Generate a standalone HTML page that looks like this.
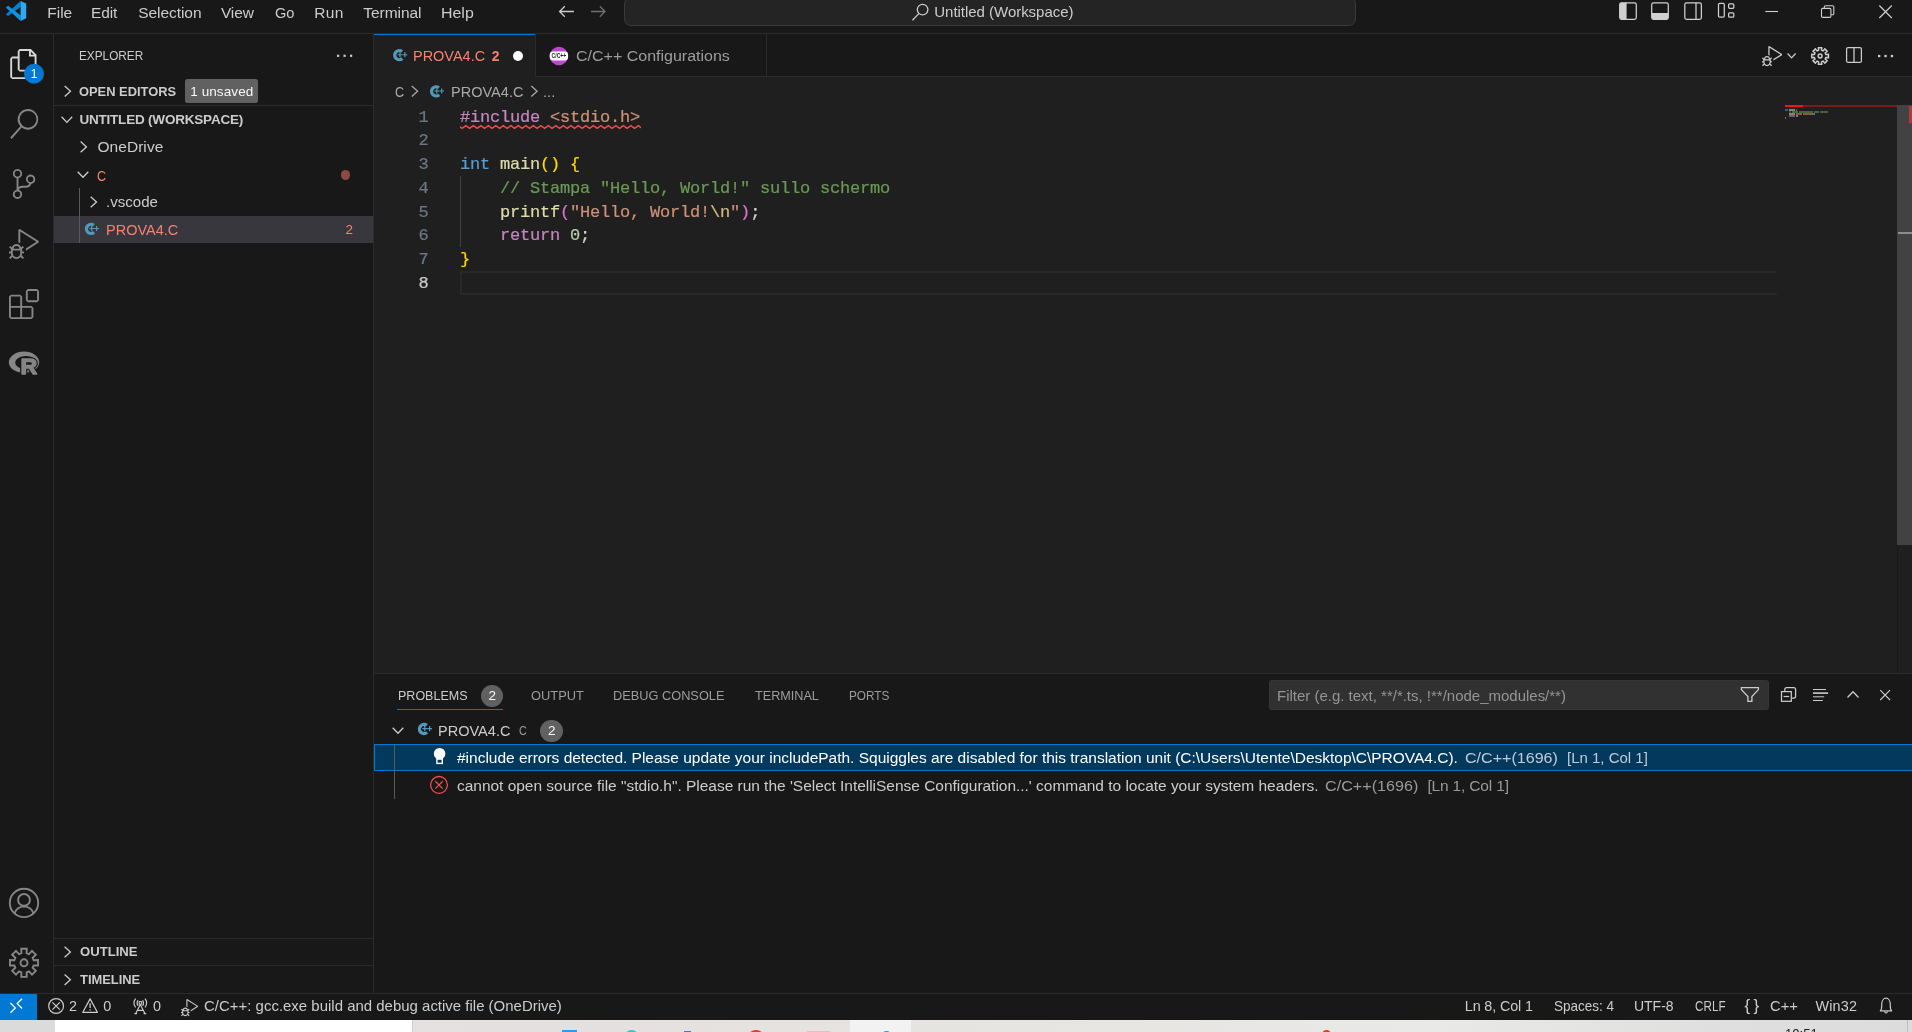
<!DOCTYPE html>
<html lang="en"><head><meta charset="utf-8"><title>PROVA4.C - Untitled (Workspace) - Visual Studio Code</title>
<style>
html,body{margin:0;padding:0;background:#181818;}
body{width:1912px;height:1032px;overflow:hidden;font-family:"Liberation Sans",sans-serif;}
#root{will-change:transform;position:relative;width:1912px;height:1032px;overflow:hidden;color:#ccc;font-size:15.5px;}
#root div,#root span,#root svg{position:absolute;box-sizing:border-box;}
.t{height:20px;line-height:20px;white-space:pre;transform-origin:0 50%;}
.b{background:#2b2b2b;}
.code{font-family:"Liberation Mono",monospace;white-space:pre;height:23.75px;line-height:23.75px;left:460px;font-size:17px;letter-spacing:-0.2px;color:#d4d4d4;margin-top:0.9px;-webkit-text-stroke:0.22px currentColor;}
.ln{font-family:"Liberation Mono",monospace;white-space:pre;height:23.75px;line-height:23.75px;font-size:17px;letter-spacing:-0.2px;color:#6e7681;width:30px;text-align:right;left:398.4px;margin-top:0.9px;-webkit-text-stroke:0.22px currentColor;}
.code span{position:static !important;}
svg{overflow:visible;}
</style></head><body><div id="root">

<!-- title bar -->
<div class="b" style="left:0;top:33px;width:1912px;height:1px"></div>
<div style="left:624px;top:-3px;width:732px;height:28.5px;border:1px solid #3a3a3a;background:#242424;border-radius:7px"></div>
<!-- activity bar / sidebar borders -->
<div class="b" style="left:53px;top:34px;width:1px;height:959px"></div>
<div class="b" style="left:373px;top:34px;width:1px;height:959px"></div>
<!-- sidebar -->
<div class="b" style="left:54px;top:105px;width:319px;height:1px"></div>
<div style="left:185px;top:79px;width:73px;height:24px;background:#616161;border-radius:2.5px"></div>
<div style="left:54px;top:215.7px;width:319px;height:27.2px;background:#37373d"></div>
<div style="left:79px;top:188.2px;width:1px;height:54.7px;background:#5a5a5a"></div>
<div style="left:341px;top:170.3px;width:9.4px;height:9.4px;border-radius:50%;background:#8c4a42"></div>
<div class="b" style="left:54px;top:938px;width:319px;height:1px"></div>
<div class="b" style="left:54px;top:965px;width:319px;height:1px"></div>
<!-- editor group -->
<div style="left:374px;top:77px;width:1538px;height:596px;background:#1f1f1f"></div>
<div class="b" style="left:374px;top:76px;width:1538px;height:1px"></div>
<div style="left:374px;top:34px;width:161px;height:43px;background:#1f1f1f"></div>
<div style="left:374px;top:33.8px;width:161px;height:1.5px;background:#0078d4"></div>
<div class="b" style="left:535px;top:34px;width:1px;height:42px"></div>
<div class="b" style="left:766px;top:34px;width:1px;height:42px"></div>
<div style="left:512.8px;top:51px;width:10.4px;height:10.4px;border-radius:50%;background:#ffffff"></div>
<!-- editor: current line, indent guide -->
<div style="left:460px;top:271px;width:1317px;height:24px;border:2px solid #282828;border-right:none"></div>
<div style="left:460px;top:176px;width:1px;height:71px;background:#404040"></div>
<!-- minimap + scrollbar -->
<div style="left:1785px;top:105px;width:112px;height:2px;background:#7c1919"></div>
<div style="left:1785px;top:105px;width:18px;height:2px;background:#ff1010"></div>
<div style="left:1785px;top:109px;width:3px;height:2px;background:#3a6184"></div>
<div style="left:1789px;top:109px;width:6px;height:2px;background:#86866f"></div>
<div style="left:1796px;top:109px;width:1px;height:2px;background:#7a6a20"></div>
<div style="left:1789px;top:111px;width:2px;height:2px;background:#3d5535"></div>
<div style="left:1792px;top:111px;width:6px;height:2px;background:#4b6b3f"></div>
<div style="left:1799px;top:111px;width:14px;height:2px;background:#46633b"></div>
<div style="left:1814px;top:111px;width:5px;height:2px;background:#46633b"></div>
<div style="left:1820px;top:111px;width:8px;height:2px;background:#46633b"></div>
<div style="left:1789px;top:113px;width:6px;height:2px;background:#86866f"></div>
<div style="left:1796px;top:113px;width:6px;height:2px;background:#7f5e4c"></div>
<div style="left:1803px;top:113px;width:9px;height:2px;background:#7f5e4c"></div>
<div style="left:1812px;top:113px;width:3px;height:2px;background:#6c6c6c"></div>
<div style="left:1789px;top:115px;width:6px;height:2px;background:#7a567a"></div>
<div style="left:1796px;top:115px;width:2px;height:2px;background:#74826d"></div>
<div style="left:1785px;top:117px;width:1px;height:2px;background:#857316"></div>
<div style="left:1897px;top:105px;width:15px;height:439.5px;background:#424242"></div>
<div style="left:1909px;top:106px;width:3px;height:17px;background:#ad3b3b"></div>
<div style="left:1898px;top:232px;width:14px;height:2px;background:#8c8c8c"></div>
<div style="left:1897px;top:545px;width:1px;height:128px;background:#171717"></div>
<!-- panel -->
<div class="b" style="left:374px;top:673px;width:1538px;height:1px"></div>
<div style="left:396.8px;top:708.5px;width:106.4px;height:1.5px;background:#0078d4"></div>
<div style="left:481px;top:684.5px;width:22.4px;height:22.4px;border-radius:50%;background:#616161"></div>
<div style="left:540.4px;top:719.8px;width:22.4px;height:22.4px;border-radius:50%;background:#616161"></div>
<div style="left:1269px;top:680px;width:500px;height:30px;background:#313131;border-radius:2.5px;border:1px solid #353535"></div>
<div style="left:374px;top:744px;width:1545px;height:27px;background:#04395e;border:1px solid #0078d4"></div>
<div style="left:394px;top:745px;width:1px;height:54px;background:#5a5a5a"></div>
<!-- status bar -->
<div class="b" style="left:0;top:993px;width:1912px;height:1px"></div>
<div style="left:0;top:994px;width:37px;height:26px;background:#0078d4"></div>
<!-- taskbar strip -->
<div style="left:0;top:1019.5px;width:1912px;height:13px;background:linear-gradient(90deg,#e6e3e1 0,#e4e0df 30%,#e6e4e1 50%,#e9e9e7 75%,#dedede 92%,#dcdcdc 100%)"></div>
<div style="left:0;top:1019.5px;width:54.5px;height:13px;background:#dcdbdb"></div>
<div style="left:54.5px;top:1019.5px;width:358.5px;height:13px;background:#ffffff;border-right:1px solid #cfcfcf"></div>
<div style="left:849.6px;top:1019.5px;width:61.7px;height:13px;background:#f2f2f2"></div>
<div style="left:562px;top:1030.2px;width:14.6px;height:3px;background:#2f9be6"></div>
<div style="left:623.7px;top:1029.6px;width:15.7px;height:16px;border-radius:50%;background:#35c1d8"></div>
<div style="left:684px;top:1031px;width:7px;height:3px;background:#5b6fb5"></div>
<div style="left:747px;top:1029.6px;width:18px;height:18px;border-radius:50%;background:#e8382f"></div>
<div style="left:806.7px;top:1031px;width:23px;height:3px;background:#e9b8c3"></div>
<div style="left:883px;top:1030.5px;width:7px;height:5px;border-radius:50% 50% 0 0;background:#2b8fe0"></div>
<div style="left:1322px;top:1029.8px;width:9px;height:9px;border-radius:50%;background:#e23a2e"></div>
<div style="left:1907px;top:1019.5px;width:1px;height:13px;background:#bdbdbd"></div>

<!-- icons -->
<svg style="left:9px;top:49px" width="30" height="30" viewBox="0 0 24 24" ><path d="M17.5 0h-9L7 1.5V6H2.5L1 7.5v15.07L2.5 24h12.07L16 22.57V18h4.7l1.3-1.43V4.5L17.5 0zm0 2.12l2.38 2.38H17.5V2.12zm-3 20.38h-12v-15H7v9.07L8.5 18h6v4.5zm6-6h-12v-15H16V6h4.5v10.5z" fill="#d7d7d7"/></svg>
<svg style="left:9px;top:109px" width="30" height="30" viewBox="0 0 24 24" ><path d="M15.25 0a8.25 8.25 0 0 0-6.18 13.72L1 22.88l1.12 1.12 8.05-9.12A8.251 8.251 0 1 0 15.25.01V0zm0 15a6.75 6.75 0 1 1 0-13.5 6.75 6.75 0 0 1 0 13.5z" fill="#868686"/></svg>
<svg style="left:9px;top:169px" width="30" height="30" viewBox="0 0 24 24" ><path d="M21.007 8.222A3.738 3.738 0 0 0 15.045 5.2a3.737 3.737 0 0 0 1.156 6.583 2.988 2.988 0 0 1-2.668 1.67h-2.99a4.456 4.456 0 0 0-2.989 1.165V7.4a3.737 3.737 0 1 0-1.494 0v9.117a3.776 3.776 0 1 0 1.816.099 2.99 2.99 0 0 1 2.668-1.667h2.99a4.484 4.484 0 0 0 4.223-3.039 3.736 3.736 0 0 0 3.25-3.687zM4.565 3.738a2.242 2.242 0 1 1 4.484 0 2.242 2.242 0 0 1-4.484 0zm4.484 16.441a2.242 2.242 0 1 1-4.484 0 2.242 2.242 0 0 1 4.484 0zm8.221-9.715a2.242 2.242 0 1 1 0-4.485 2.242 2.242 0 0 1 0 4.485z" fill="#868686"/></svg>
<svg style="left:9px;top:229px" width="30" height="30" viewBox="0 0 24 24" ><path d="M10.94 13.5l-1.32 1.32a3.73 3.73 0 0 0-7.24 0L1.06 13.5 0 14.56l1.72 1.72-.22.22V18H0v1.5h1.5v.08c.077.489.214.966.41 1.42L0 22.94 1.06 24l1.65-1.65A4.308 4.308 0 0 0 6 24a4.31 4.31 0 0 0 3.29-1.65L10.94 24 12 22.94 10.09 21c.198-.464.336-.951.41-1.45v-.1H12V18h-1.5v-1.5l-.22-.22L12 14.56l-1.06-1.06zM6 13.5a2.25 2.25 0 0 1 2.25 2.25h-4.5A2.25 2.25 0 0 1 6 13.5zm3 6a3.33 3.33 0 0 1-3 3 3.33 3.33 0 0 1-3-3v-2.25h6v2.25zm14.76-9.9v1.26L13.5 17.37V15.6l8.5-5.37L9 2v9.46a5.07 5.07 0 0 0-1.5-.72V.63L8.64 0l15.12 9.6z" fill="#868686"/></svg>
<svg style="left:9px;top:289px" width="30" height="30" viewBox="0 0 24 24" ><path d="M13.5 1.5L15 0h7.5L24 1.5V9l-1.5 1.5H15L13.5 9V1.5zm1.5 0V9h7.5V1.5H15zM0 15V6l1.5-1.5H9L10.5 6v7.5H18l1.5 1.5v7.5L18 24H1.5L0 22.5V15zm9-1.5V6H1.5v7.5H9zM9 15H1.5v7.5H9V15zm1.5 7.5H18V15h-7.5v7.5z" fill="#868686"/></svg>
<svg style="left:0;top:0" width="1" height="1"><polyline points="64.70,86.00 70.50,91.30 64.70,96.60" fill="none" stroke="#cccccc" stroke-width="1.3" stroke-linejoin="miter"/></svg>
<svg style="left:0;top:0" width="1" height="1"><polyline points="61.60,116.80 66.90,122.40 72.20,116.80" fill="none" stroke="#cccccc" stroke-width="1.3"/></svg>
<svg style="left:0;top:0" width="1" height="1"><polyline points="80.60,141.60 86.40,146.90 80.60,152.20" fill="none" stroke="#cccccc" stroke-width="1.3" stroke-linejoin="miter"/></svg>
<svg style="left:0;top:0" width="1" height="1"><polyline points="77.70,171.70 83.00,177.30 88.30,171.70" fill="none" stroke="#cccccc" stroke-width="1.3"/></svg>
<svg style="left:0;top:0" width="1" height="1"><polyline points="90.70,196.70 96.50,202.00 90.70,207.30" fill="none" stroke="#cccccc" stroke-width="1.3" stroke-linejoin="miter"/></svg>
<svg style="left:0;top:0" width="1" height="1"><polyline points="64.60,946.70 70.40,952.00 64.60,957.30" fill="none" stroke="#cccccc" stroke-width="1.3" stroke-linejoin="miter"/></svg>
<svg style="left:0;top:0" width="1" height="1"><polyline points="64.60,974.50 70.40,979.80 64.60,985.10" fill="none" stroke="#cccccc" stroke-width="1.3" stroke-linejoin="miter"/></svg>
<svg style="left:0;top:0" width="1" height="1"><polyline points="411.80,85.90 417.60,91.20 411.80,96.50" fill="none" stroke="#a9a9a9" stroke-width="1.3" stroke-linejoin="miter"/></svg>
<svg style="left:0;top:0" width="1" height="1"><polyline points="531.30,85.90 537.10,91.20 531.30,96.50" fill="none" stroke="#a9a9a9" stroke-width="1.3" stroke-linejoin="miter"/></svg>
<svg style="left:0;top:0" width="1" height="1"><polyline points="392.70,727.70 398.00,733.30 403.30,727.70" fill="none" stroke="#cccccc" stroke-width="1.3"/></svg>
<svg style="left:0;top:0" width="1" height="1"><polyline points="1787.60,53.55 1791.60,57.85 1795.60,53.55" fill="none" stroke="#cccccc" stroke-width="1.3"/></svg>
<svg style="left:0;top:0" width="1" height="1"><polyline points="1847.50,697.50 1853.00,691.70 1858.50,697.50" fill="none" stroke="#cccccc" stroke-width="1.3"/></svg>
<svg style="left:0;top:0" width="1" height="1"><circle cx="34" cy="73.7" r="10" fill="#0078d4"/></svg>
<span class="t" style="left:24px;top:63.7px;width:20px;text-align:center;font-size:12px;color:#fff">1</span>
<svg style="left:0;top:0" width="1" height="1"><rect x="337.0" y="54.7" width="2.2" height="2.2" fill="#cccccc"/><rect x="343.5" y="54.7" width="2.2" height="2.2" fill="#cccccc"/><rect x="350.0" y="54.7" width="2.2" height="2.2" fill="#cccccc"/></svg>
<svg style="left:0;top:0" width="1" height="1"><rect x="1878.0" y="54.9" width="2.3" height="2.3" fill="#cccccc"/><rect x="1884.4" y="54.9" width="2.3" height="2.3" fill="#cccccc"/><rect x="1890.8" y="54.9" width="2.3" height="2.3" fill="#cccccc"/></svg>
<svg style="left:0;top:0" width="1" height="1"><polygon points="20.6,1.0 20.6,6.9 8.1,16.1 5.8,14.5" fill="#0b7fcf"/><polygon points="5.8,7.4 8.1,5.8 20.6,15.2 20.6,21.1" fill="#1292dd"/><polygon points="20.6,1.0 26.2,3.6 26.2,18.3 20.6,21.1" fill="#2aaaf2"/></svg>
<svg style="left:0;top:0" width="1" height="1"><path d="M573.9 11.5H559.5999999999999 M564.8 6.3L559.5999999999999 11.5L564.8 16.7" fill="none" stroke="#cccccc" stroke-width="1.3"/></svg>
<svg style="left:0;top:0" width="1" height="1"><path d="M591 11.5H605.0 M599.8 6.3L605.0 11.5L599.8 16.7" fill="none" stroke="#6f6f6f" stroke-width="1.3"/></svg>
<svg style="left:0;top:0" width="1" height="1"><circle cx="922.6" cy="9.6" r="5.3" fill="none" stroke="#cccccc" stroke-width="1.3"/><path d="M918.8 13.6L912.5 20.2" stroke="#cccccc" stroke-width="1.3"/></svg>
<svg style="left:0;top:0" width="1" height="1"><rect x="1619.7" y="2.9" width="16.6" height="16.4" rx="1.8" fill="none" stroke="#d0d0d0" stroke-width="1.25"/><path d="M1619.7 4.5a1.7 1.7 0 0 1 1.7-1.7H1626.6V19.3H1621.4a1.7 1.7 0 0 1-1.7-1.7z" fill="#d0d0d0"/></svg>
<svg style="left:0;top:0" width="1" height="1"><rect x="1651.7" y="2.9" width="16.6" height="16.4" rx="1.8" fill="none" stroke="#d0d0d0" stroke-width="1.25"/><path d="M1651.7 13H1668.3V17.6a1.7 1.7 0 0 1-1.7 1.7H1653.4a1.7 1.7 0 0 1-1.7-1.7z" fill="#d0d0d0"/></svg>
<svg style="left:0;top:0" width="1" height="1"><rect x="1684.8" y="2.9" width="16.6" height="16.4" rx="1.8" fill="none" stroke="#d0d0d0" stroke-width="1.25"/><path d="M1696 2.9V19.3" stroke="#d0d0d0" stroke-width="1.25"/></svg>
<svg style="left:0;top:0" width="1" height="1"><rect x="1718.5" y="3.4" width="5.8" height="13.8" rx="1.2" fill="none" stroke="#d0d0d0" stroke-width="1.25"/><rect x="1728.6" y="3.9" width="5.2" height="4.4" rx="1.0" fill="none" stroke="#d0d0d0" stroke-width="1.25"/><rect x="1728.6" y="12.8" width="5.2" height="4.4" rx="1.0" fill="none" stroke="#d0d0d0" stroke-width="1.25"/></svg>
<svg style="left:0;top:0" width="1" height="1"><path d="M1765.3 11.5H1778" stroke="#d0d0d0" stroke-width="1.1"/></svg>
<svg style="left:0;top:0" width="1" height="1"><rect x="1821.5" y="8.4" width="9.4" height="9" rx="1.2" fill="none" stroke="#d0d0d0" stroke-width="1.1"/><path d="M1824.3 8.2V6.9a1.2 1.2 0 0 1 1.2-1.2H1832.6a1.2 1.2 0 0 1 1.2 1.2V13.6a1.2 1.2 0 0 1-1.2 1.2H1831.2" fill="none" stroke="#d0d0d0" stroke-width="1.1"/></svg>
<svg style="left:0;top:0" width="1" height="1"><path d="M1879.3 5.5L1891.8 18M1891.8 5.5L1879.3 18" stroke="#d0d0d0" stroke-width="1.15"/></svg>
<svg style="left:0;top:0" width="1" height="1"><path fill-rule="evenodd" fill="#868686" d="M8.8 362.3a15.2 10.7 0 1 0 30.4 0a15.2 10.7 0 1 0 -30.4 0zM15.1 362.6a10.9 6.6 0 1 1 21.8 0a10.9 6.6 0 1 1 -21.8 0z"/><text transform="translate(20.6,374.2) scale(1.08,1)" x="0" y="0" font-family="Liberation Sans, sans-serif" font-weight="700" font-size="21.5" fill="#181818" stroke="#181818" stroke-width="3.6" stroke-linejoin="round">R</text><text transform="translate(20.6,374.2) scale(1.08,1)" x="0" y="0" font-family="Liberation Sans, sans-serif" font-weight="700" font-size="21.5" fill="#868686" stroke="#868686" stroke-width="1.3" stroke-linejoin="round">R</text></svg>
<svg style="left:0;top:0" width="1" height="1"><circle cx="24" cy="902.9" r="14.2" fill="none" stroke="#868686" stroke-width="1.9"/><circle cx="24" cy="899.9" r="5.9" fill="none" stroke="#868686" stroke-width="1.9"/><path d="M14.6 913.2Q17 906.6 24 906.6Q31 906.6 33.4 913.2" fill="none" stroke="#868686" stroke-width="1.9"/></svg>
<svg style="left:0;top:0" width="1" height="1"><polygon points="21.41,953.14 21.27,948.76 26.73,948.76 26.59,953.14 29.00,954.14 32.00,950.94 35.86,954.80 32.66,957.80 33.66,960.21 38.04,960.07 38.04,965.53 33.66,965.39 32.66,967.80 35.86,970.80 32.00,974.66 29.00,971.46 26.59,972.46 26.73,976.84 21.27,976.84 21.41,972.46 19.00,971.46 16.00,974.66 12.14,970.80 15.34,967.80 14.34,965.39 9.96,965.53 9.96,960.07 14.34,960.21 15.34,957.80 12.14,954.80 16.00,950.94 19.00,954.14" fill="none" stroke="#868686" stroke-width="1.9" stroke-linejoin="miter"/><circle cx="24" cy="962.8" r="3.5" fill="none" stroke="#868686" stroke-width="1.9"/></svg>
<svg style="left:0;top:0" width="1" height="1"><polygon points="1818.57,50.30 1818.48,47.66 1821.72,47.66 1821.63,50.30 1823.05,50.89 1824.85,48.95 1827.15,51.25 1825.21,53.05 1825.80,54.47 1828.44,54.38 1828.44,57.62 1825.80,57.53 1825.21,58.95 1827.15,60.75 1824.85,63.05 1823.05,61.11 1821.63,61.70 1821.72,64.34 1818.48,64.34 1818.57,61.70 1817.15,61.11 1815.35,63.05 1813.05,60.75 1814.99,58.95 1814.40,57.53 1811.76,57.62 1811.76,54.38 1814.40,54.47 1814.99,53.05 1813.05,51.25 1815.35,48.95 1817.15,50.89" fill="none" stroke="#cccccc" stroke-width="1.5" stroke-linejoin="miter"/><circle cx="1820.1" cy="56" r="1.9" fill="none" stroke="#cccccc" stroke-width="1.5"/></svg>
<svg style="left:1761.7px;top:46px" width="20.2" height="20.2" viewBox="0 0 24 24" ><path d="M10.94 13.5l-1.32 1.32a3.73 3.73 0 0 0-7.24 0L1.06 13.5 0 14.56l1.72 1.72-.22.22V18H0v1.5h1.5v.08c.077.489.214.966.41 1.42L0 22.94 1.06 24l1.65-1.65A4.308 4.308 0 0 0 6 24a4.31 4.31 0 0 0 3.29-1.65L10.94 24 12 22.94 10.09 21c.198-.464.336-.951.41-1.45v-.1H12V18h-1.5v-1.5l-.22-.22L12 14.56l-1.06-1.06zM6 13.5a2.25 2.25 0 0 1 2.25 2.25h-4.5A2.25 2.25 0 0 1 6 13.5zm3 6a3.33 3.33 0 0 1-3 3 3.33 3.33 0 0 1-3-3v-2.25h6v2.25zm14.76-9.9v1.26L13.5 17.37V15.6l8.5-5.37L9 2v9.46a5.07 5.07 0 0 0-1.5-.72V.63L8.64 0l15.12 9.6z" fill="#cccccc"/></svg>
<svg style="left:0;top:0" width="1" height="1"><rect x="1846.6" y="47.6" width="14.8" height="14.8" rx="1.5" fill="none" stroke="#cccccc" stroke-width="1.25"/><path d="M1854 47.6V62.4" stroke="#cccccc" stroke-width="1.25"/></svg>
<svg style="left:0;top:0" width="1" height="1"><path d="M402.10 51.51A4.55 4.55 0 1 0 402.34 58.48" fill="none" stroke="#519aba" stroke-width="3.30"/><path d="M397.60 54.70H402.40M400.00 52.10V57.30" stroke="#519aba" stroke-width="1.15" fill="none"/><path d="M402.50 54.70H407.30M404.90 52.10V57.30" stroke="#519aba" stroke-width="1.15" fill="none"/></svg>
<svg style="left:0;top:0" width="1" height="1"><path d="M438.90 87.81A4.55 4.55 0 1 0 439.14 94.78" fill="none" stroke="#519aba" stroke-width="3.30"/><path d="M434.40 91.00H439.20M436.80 88.40V93.60" stroke="#519aba" stroke-width="1.15" fill="none"/><path d="M439.30 91.00H444.10M441.70 88.40V93.60" stroke="#519aba" stroke-width="1.15" fill="none"/></svg>
<svg style="left:0;top:0" width="1" height="1"><path d="M93.80 225.31A4.55 4.55 0 1 0 94.04 232.28" fill="none" stroke="#519aba" stroke-width="3.30"/><path d="M89.30 228.50H94.10M91.70 225.90V231.10" stroke="#519aba" stroke-width="1.15" fill="none"/><path d="M94.20 228.50H99.00M96.60 225.90V231.10" stroke="#519aba" stroke-width="1.15" fill="none"/></svg>
<svg style="left:0;top:0" width="1" height="1"><path d="M426.80 725.41A4.55 4.55 0 1 0 427.04 732.38" fill="none" stroke="#519aba" stroke-width="3.30"/><path d="M422.30 728.60H427.10M424.70 726.00V731.20" stroke="#519aba" stroke-width="1.15" fill="none"/><path d="M427.20 728.60H432.00M429.60 726.00V731.20" stroke="#519aba" stroke-width="1.15" fill="none"/></svg>
<svg style="left:0;top:0" width="1" height="1"><circle cx="558.9" cy="56" r="9.2" fill="#b84ac9"/><rect x="549.7" y="51.5" width="18.4" height="9" rx="3.4" fill="#ffffff"/><text x="558.9" y="58.3" text-anchor="middle" font-family="Liberation Sans, sans-serif" font-weight="700" font-size="6.4" fill="#222" textLength="14.6" lengthAdjust="spacingAndGlyphs">C/C++</text></svg>
<svg style="left:0;top:0" width="1" height="1"><path d="M1741.4 687.7H1758.4V689.6L1751.9 696.6V701.3H1747.9V696.6L1741.4 689.6Z" fill="none" stroke="#cccccc" stroke-width="1.3" stroke-linejoin="miter"/></svg>
<svg style="left:0;top:0" width="1" height="1"><rect x="1781.5" y="691.6" width="9.8" height="9.7" fill="none" stroke="#cccccc" stroke-width="1.25"/><path d="M1784.8 691.4V689.4a1.9 1.9 0 0 1 1.9-1.9H1793.7a1.9 1.9 0 0 1 1.9 1.9V696.2a1.9 1.9 0 0 1-1.9 1.9H1791.6" fill="none" stroke="#cccccc" stroke-width="1.25"/><path d="M1783.6 696.5H1789.2" stroke="#cccccc" stroke-width="1.25"/></svg>
<svg style="left:0;top:0" width="1" height="1"><path d="M1813 689.5H1826" stroke="#cccccc" stroke-width="1.0"/><path d="M1813 693.1H1828.1" stroke="#cccccc" stroke-width="1.6"/><path d="M1813 696.8H1824.2" stroke="#cccccc" stroke-width="1.0"/><path d="M1813 700.5H1822.8" stroke="#cccccc" stroke-width="1.0"/></svg>
<svg style="left:0;top:0" width="1" height="1"><path d="M1880.2 690.2L1890 700M1890 690.2L1880.2 700" stroke="#cccccc" stroke-width="1.15"/></svg>
<svg style="left:0;top:0" width="1" height="1"><circle cx="439.6" cy="753.7" r="5.8" fill="#ffffff"/><path d="M436.2 757H443V764.1H436.2Z" fill="#ffffff"/><rect x="437.6" y="759.8" width="4" height="2.9" fill="#04395e"/></svg>
<svg style="left:0;top:0" width="1" height="1"><circle cx="439" cy="784.9" r="8.4" fill="none" stroke="#f14c4c" stroke-width="1.3"/><path d="M435.3 781.2L442.7 788.6M442.7 781.2L435.3 788.6" stroke="#f14c4c" stroke-width="1.3"/></svg>
<svg style="left:0;top:0" width="1" height="1"><path d="M10.4 1003L15.3 1007.9L10.4 1012.8" fill="none" stroke="#fff" stroke-width="1.3"/><path d="M22.1 998.7L17.2 1003.6L22.1 1008.5" fill="none" stroke="#fff" stroke-width="1.3"/></svg>
<svg style="left:0;top:0" width="1" height="1"><circle cx="56.1" cy="1006" r="7.4" fill="none" stroke="#cccccc" stroke-width="1.2"/><path d="M52.4 1002.3L59.8 1009.7M59.8 1002.3L52.4 1009.7" stroke="#cccccc" stroke-width="1.2"/></svg>
<svg style="left:0;top:0" width="1" height="1"><path d="M90.1 998.9L97.4 1012.3H82.8Z" fill="none" stroke="#cccccc" stroke-width="1.2" stroke-linejoin="round"/><path d="M90.1 1003.3V1008" stroke="#cccccc" stroke-width="1.3"/><path d="M90.1 1009.2V1010.6" stroke="#cccccc" stroke-width="1.3"/></svg>
<svg style="left:0;top:0" width="1" height="1"><path d="M135.6 998.6Q132.3 1003 135.6 1007.4M138.0 1000.2Q136.2 1003 138.0 1005.8M145.0 998.6Q148.3 1003 145.0 1007.4M142.6 1000.2Q144.4 1003 142.6 1005.8" fill="none" stroke="#cccccc" stroke-width="1.15"/><rect x="139.2" y="1001.6" width="2.2" height="2.6" fill="none" stroke="#cccccc" stroke-width="1.0"/><path d="M140.3 1004.4L135.6 1013.8M140.3 1004.4L145 1013.8M137.3 1010.4H143.3M134.4 1013.6H137M143.6 1013.6H146.2" fill="none" stroke="#cccccc" stroke-width="1.15"/></svg>
<svg style="left:180.7px;top:998.6px" width="17.2" height="17.2" viewBox="0 0 24 24" ><path d="M10.94 13.5l-1.32 1.32a3.73 3.73 0 0 0-7.24 0L1.06 13.5 0 14.56l1.72 1.72-.22.22V18H0v1.5h1.5v.08c.077.489.214.966.41 1.42L0 22.94 1.06 24l1.65-1.65A4.308 4.308 0 0 0 6 24a4.31 4.31 0 0 0 3.29-1.65L10.94 24 12 22.94 10.09 21c.198-.464.336-.951.41-1.45v-.1H12V18h-1.5v-1.5l-.22-.22L12 14.56l-1.06-1.06zM6 13.5a2.25 2.25 0 0 1 2.25 2.25h-4.5A2.25 2.25 0 0 1 6 13.5zm3 6a3.33 3.33 0 0 1-3 3 3.33 3.33 0 0 1-3-3v-2.25h6v2.25zm14.76-9.9v1.26L13.5 17.37V15.6l8.5-5.37L9 2v9.46a5.07 5.07 0 0 0-1.5-.72V.63L8.64 0l15.12 9.6z" fill="#cccccc"/></svg>
<svg style="left:0;top:0" width="1" height="1"><path d="M1880.3 1010.9C1881.9 1009.6 1881.7 1007.4 1881.7 1004.6C1881.7 1000.8 1883.6 998.2 1886 998.2C1888.4 998.2 1890.3 1000.8 1890.3 1004.6C1890.3 1007.4 1890.1 1009.6 1891.7 1010.9Z" fill="none" stroke="#cccccc" stroke-width="1.2" stroke-linejoin="round"/><path d="M1884.5 1011.4Q1886 1014.6 1887.5 1011.4" fill="none" stroke="#cccccc" stroke-width="1.2"/></svg>
<!-- code -->
<div class="ln" style="top:104.625px">1</div>
<div class="ln" style="top:128.375px">2</div>
<div class="ln" style="top:152.125px">3</div>
<div class="ln" style="top:175.875px">4</div>
<div class="ln" style="top:199.625px">5</div>
<div class="ln" style="top:223.375px">6</div>
<div class="ln" style="top:247.125px">7</div>
<div class="ln" style="top:270.875px;color:#cccccc">8</div>
<div class="code" style="top:104.625px"><span style="color:#c586c0">#include</span> <span style="color:#ce9178">&lt;stdio.h&gt;</span></div>
<div class="code" style="top:152.125px"><span style="color:#569cd6">int</span> <span style="color:#dcdcaa">main</span><span style="color:#ffd700">()</span> <span style="color:#ffd700">{</span></div>
<div class="code" style="top:175.875px">    <span style="color:#6a9955">// Stampa "Hello, World!" sullo schermo</span></div>
<div class="code" style="top:199.625px">    <span style="color:#dcdcaa">printf</span><span style="color:#da70d6">(</span><span style="color:#ce9178">"Hello, World!</span><span style="color:#d7ba7d">\n</span><span style="color:#ce9178">"</span><span style="color:#da70d6">)</span>;</div>
<div class="code" style="top:223.375px">    <span style="color:#c586c0">return</span> <span style="color:#b5cea8">0</span>;</div>
<div class="code" style="top:247.125px"><span style="color:#ffd700">}</span></div>
<svg style="left:460px;top:124px;overflow:hidden" width="180.5" height="6" viewBox="0 0 180.5 6"><path d="M-1.65 1.70 L2.10 4.30 L5.85 1.70 L9.60 4.30 L13.35 1.70 L17.10 4.30 L20.85 1.70 L24.60 4.30 L28.35 1.70 L32.10 4.30 L35.85 1.70 L39.60 4.30 L43.35 1.70 L47.10 4.30 L50.85 1.70 L54.60 4.30 L58.35 1.70 L62.10 4.30 L65.85 1.70 L69.60 4.30 L73.35 1.70 L77.10 4.30 L80.85 1.70 L84.60 4.30 L88.35 1.70 L92.10 4.30 L95.85 1.70 L99.60 4.30 L103.35 1.70 L107.10 4.30 L110.85 1.70 L114.60 4.30 L118.35 1.70 L122.10 4.30 L125.85 1.70 L129.60 4.30 L133.35 1.70 L137.10 4.30 L140.85 1.70 L144.60 4.30 L148.35 1.70 L152.10 4.30 L155.85 1.70 L159.60 4.30 L163.35 1.70 L167.10 4.30 L170.85 1.70 L174.60 4.30 L178.35 1.70 L182.10 4.30" fill="none" stroke="#f14c4c" stroke-width="1.45" stroke-linejoin="miter"/></svg>
<!-- text -->
<span class="t" style="left:47.20px;top:2.50px;font-size:15.5px;color:#cccccc;letter-spacing:0.015px;">File</span>
<span class="t" style="left:91.10px;top:2.50px;font-size:15.5px;color:#cccccc;letter-spacing:-0.167px;">Edit</span>
<span class="t" style="left:138.30px;top:2.50px;font-size:15.5px;color:#cccccc;letter-spacing:-0.068px;">Selection</span>
<span class="t" style="left:220.90px;top:2.50px;font-size:15.5px;color:#cccccc;letter-spacing:-0.074px;">View</span>
<span class="t" style="left:275.40px;top:2.50px;font-size:15.5px;color:#cccccc;transform:scaleX(0.9423);">Go</span>
<span class="t" style="left:314.30px;top:2.50px;font-size:15.5px;color:#cccccc;letter-spacing:0.293px;">Run</span>
<span class="t" style="left:363.30px;top:2.50px;font-size:15.5px;color:#cccccc;letter-spacing:-0.061px;">Terminal</span>
<span class="t" style="left:441.37px;top:2.50px;font-size:15.5px;color:#cccccc;transform:scaleX(1.0278);">Help</span>
<span class="t" style="left:934.30px;top:2.20px;font-size:15px;color:#cccccc;letter-spacing:-0.030px;">Untitled (Workspace)</span>
<span class="t" style="left:413.27px;top:46.00px;font-size:15.5px;color:#f88070;transform:scaleX(0.9337);">PROVA4.C</span>
<span class="t" style="left:491.75px;top:46.00px;font-size:14px;color:#f88070;font-weight:700;">2</span>
<span class="t" style="left:576.40px;top:46.00px;font-size:15.5px;color:#9d9d9d;transform:scaleX(1.0321);">C/C++ Configurations</span>
<span class="t" style="left:394.60px;top:82.20px;font-size:15.5px;color:#a9a9a9;transform:scaleX(0.8182);">C</span>
<span class="t" style="left:451.36px;top:82.20px;font-size:15.5px;color:#a9a9a9;transform:scaleX(0.9376);">PROVA4.C</span>
<span class="t" style="left:543.25px;top:82.20px;font-size:15.5px;color:#a9a9a9;transform:scaleX(0.9517);">...</span>
<span class="t" style="left:78.53px;top:45.80px;font-size:13.5px;color:#cccccc;transform:scaleX(0.8739);">EXPLORER</span>
<span class="t" style="left:79.40px;top:82.10px;font-size:13.5px;color:#cccccc;font-weight:700;transform:scaleX(0.9541);">OPEN EDITORS</span>
<span class="t" style="left:190.20px;top:81.80px;font-size:13.5px;color:#f8f8f8;letter-spacing:0.101px;">1 unsaved</span>
<span class="t" style="left:79.40px;top:110.40px;font-size:13.5px;color:#cccccc;font-weight:700;letter-spacing:-0.202px;">UNTITLED (WORKSPACE)</span>
<span class="t" style="left:97.40px;top:137.30px;font-size:15.5px;color:#cccccc;letter-spacing:0.065px;">OneDrive</span>
<span class="t" style="left:97.40px;top:165.70px;font-size:15.5px;color:#f88070;transform:scaleX(0.8091);">C</span>
<span class="t" style="left:106.23px;top:192.40px;font-size:15.5px;color:#cccccc;transform:scaleX(0.9730);">.vscode</span>
<span class="t" style="left:106.26px;top:220.20px;font-size:15.5px;color:#f88070;transform:scaleX(0.9350);">PROVA4.C</span>
<span class="t" style="left:345.50px;top:220.20px;font-size:13.5px;color:#f88070;">2</span>
<span class="t" style="left:79.70px;top:942.00px;font-size:13.5px;color:#cccccc;font-weight:700;transform:scaleX(0.9706);">OUTLINE</span>
<span class="t" style="left:79.70px;top:969.80px;font-size:13.5px;color:#cccccc;font-weight:700;transform:scaleX(0.9557);">TIMELINE</span>
<span class="t" style="left:398.17px;top:685.80px;font-size:13.5px;color:#cccccc;transform:scaleX(0.9268);">PROBLEMS</span>
<span class="t" style="left:488.50px;top:685.60px;font-size:13.5px;color:#f8f8f8;">2</span>
<span class="t" style="left:531.30px;top:685.80px;font-size:13.5px;color:#9d9d9d;transform:scaleX(0.9520);">OUTPUT</span>
<span class="t" style="left:613.05px;top:685.80px;font-size:13.5px;color:#9d9d9d;transform:scaleX(0.9463);">DEBUG CONSOLE</span>
<span class="t" style="left:754.90px;top:685.80px;font-size:13.5px;color:#9d9d9d;transform:scaleX(0.9353);">TERMINAL</span>
<span class="t" style="left:849.13px;top:685.80px;font-size:13.5px;color:#9d9d9d;transform:scaleX(0.8728);">PORTS</span>
<span class="t" style="left:1276.83px;top:685.50px;font-size:15.5px;color:#959595;transform:scaleX(0.9665);">Filter (e.g. text, **/*.ts, !**/node_modules/**)</span>
<span class="t" style="left:438.36px;top:720.50px;font-size:15.5px;color:#cccccc;transform:scaleX(0.9376);">PROVA4.C</span>
<span class="t" style="left:518.60px;top:720.50px;font-size:13.5px;color:#9a9a9a;transform:scaleX(0.8000);">C</span>
<span class="t" style="left:548.10px;top:721.00px;font-size:13.5px;color:#f8f8f8;">2</span>
<span class="t" style="left:457.00px;top:748.40px;font-size:15.5px;color:#ffffff;letter-spacing:-0.012px;">#include errors detected. Please update your includePath. Squiggles are disabled for this translation unit (C:\Users\Utente\Desktop\C\PROVA4.C).</span>
<span class="t" style="left:1464.90px;top:748.40px;font-size:15.5px;color:#c0cbd4;transform:scaleX(1.0364);">C/C++(1696)</span>
<span class="t" style="left:1567.03px;top:748.40px;font-size:15.5px;color:#c0cbd4;transform:scaleX(0.9675);">[Ln 1, Col 1]</span>
<span class="t" style="left:457.00px;top:775.70px;font-size:15.5px;color:#cccccc;letter-spacing:-0.025px;">cannot open source file &quot;stdio.h&quot;. Please run the &#x27;Select IntelliSense Configuration...&#x27; command to locate your system headers.</span>
<span class="t" style="left:1325.30px;top:775.70px;font-size:15.5px;color:#9a9a9a;transform:scaleX(1.0409);">C/C++(1696)</span>
<span class="t" style="left:1427.40px;top:775.70px;font-size:15.5px;color:#9a9a9a;letter-spacing:-0.164px;">[Ln 1, Col 1]</span>
<span class="t" style="left:69.10px;top:996.00px;font-size:14.4px;color:#cccccc;">2</span>
<span class="t" style="left:103.15px;top:996.00px;font-size:14.4px;color:#cccccc;">0</span>
<span class="t" style="left:152.95px;top:996.00px;font-size:14.4px;color:#cccccc;">0</span>
<span class="t" style="left:203.70px;top:996.00px;font-size:14.4px;color:#cccccc;transform:scaleX(1.0403);">C/C++: gcc.exe build and debug active file (OneDrive)</span>
<span class="t" style="left:1464.80px;top:996.00px;font-size:14.4px;color:#cccccc;letter-spacing:-0.150px;">Ln 8, Col 1</span>
<span class="t" style="left:1554.40px;top:996.00px;font-size:14.4px;color:#cccccc;transform:scaleX(0.9391);">Spaces: 4</span>
<span class="t" style="left:1634.43px;top:996.00px;font-size:14.4px;color:#cccccc;transform:scaleX(0.9707);">UTF-8</span>
<span class="t" style="left:1694.90px;top:996.00px;font-size:14.4px;color:#cccccc;transform:scaleX(0.8124);">CRLF</span>
<span class="t" style="left:1744.60px;top:995.60px;font-size:17px;color:#cccccc;">{</span>
<span class="t" style="left:1753.40px;top:995.60px;font-size:17px;color:#cccccc;">}</span>
<span class="t" style="left:1769.90px;top:996.00px;font-size:14.4px;color:#cccccc;transform:scaleX(1.0263);">C++</span>
<span class="t" style="left:1815.50px;top:996.00px;font-size:14.4px;color:#cccccc;letter-spacing:0.153px;">Win32</span>
<span class="t" style="left:1784.60px;top:1023.90px;font-size:14.5px;color:#1c1c1c;transform:scaleX(0.9029);">10:51</span>
</div></body></html>
